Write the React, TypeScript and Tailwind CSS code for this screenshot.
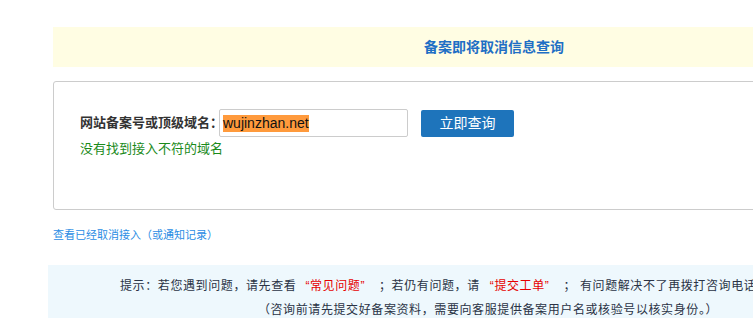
export default function App() {
  return (
    <div
      lang="zh-CN"
      className="h-[318px] w-[753px] overflow-hidden bg-white text-[13px] text-[#333]"
      style={{ fontFamily: '"Liberation Sans", "Noto Sans CJK SC", sans-serif' }}
    >
      <div className="ml-[53px] w-[882px] shrink-0 pt-[27px]">
        {/* Banner */}
        <div className="flex h-[40px] items-center justify-center bg-[#fffde3] text-[14px] font-bold text-[#1f6fc5]">
          备案即将取消信息查询
        </div>

        {/* Query box */}
        <div className="mt-[14px] h-[129px] rounded-[3px] border border-[#cccccc] pl-[26px] pt-[27px]">
          <div className="flex items-center">
            <span className="w-[139px] whitespace-nowrap text-[13px] font-bold text-[#333]">网站备案号或顶级域名：</span>
            <div className="flex h-[28px] w-[189px] items-center rounded-[2px] border border-[#cccccc] pl-[3px]">
              <span className="bg-[#ff9a3c] text-[14px] leading-[17px] text-[#111]">wujinzhan.net</span>
            </div>
            <button className="ml-[13px] h-[27px] w-[93px] rounded-[2px] bg-[#1e74bb] text-[14px] text-white">
              立即查询
            </button>
          </div>
          <div className="mt-[2px] text-[13px] leading-[20px] text-[#1a8a1a]">没有找到接入不符的域名</div>
        </div>

        {/* Link */}
        <div className="mt-[17px] text-[11px] leading-[16px] text-[#2b8de4]">查看已经取消接入（或通知记录）</div>

        {/* Tips */}
        <div className="-ml-[5px] mt-[22px] w-[880px] bg-[#eef8fd] pt-[9px] text-[12px] leading-[24px] text-[#2a3345]">
          <div className="whitespace-nowrap pl-[72px] tracking-[0.6px]">
            <span>提示：若您遇到问题，请先查看</span>
            <span className="ml-[9px] text-[#e60000]">“常见问题”</span>
            <span className="ml-[14px]">；若仍有问题，请</span>
            <span className="ml-[10px] text-[#e60000]">“提交工单”</span>
            <span className="ml-[14px]">； 有问题解决不了再拨打咨询电话 95187</span>
          </div>
          <div className="whitespace-nowrap text-center tracking-[0.6px]">
            （咨询前请先提交好备案资料，需要向客服提供备案用户名或核验号以核实身份。）
          </div>
        </div>
      </div>
    </div>
  )
}
